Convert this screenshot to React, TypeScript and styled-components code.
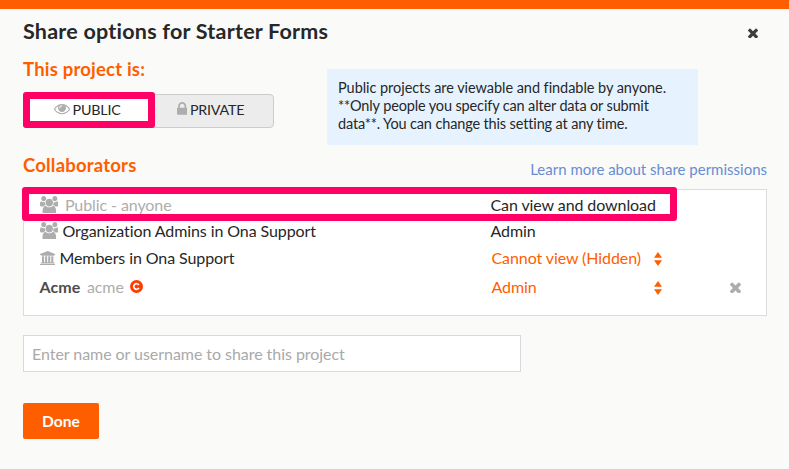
import React from "react";
import styled, { createGlobalStyle } from "styled-components";

const GlobalStyle = createGlobalStyle`
  * { box-sizing: border-box; }
  body { margin: 0; background: #fafaf8; color: #272727; font-family: Lato, "Open Sans", sans-serif; font-size: 16px; }
`;

const Dialog = styled.main`
  height: 469px;
  overflow: hidden;
  border-top: 9px solid #ff5e00;
  background: #fafaf8;
  padding: 9px 22px 0 23px;
`;

const Header = styled.header`
  display: flex;
  align-items: center;
  justify-content: space-between;
  height: 26px;
  padding-right: 8.7px;
`;

const Title = styled.h1`
  margin: 0;
  font-size: 21.5px;
  line-height: 26px;
  letter-spacing: 0.23px;
  color: #272727;
`;

const IconButton = styled.button`
  display: flex;
  border: 0;
  padding: 0;
  background: none;
  color: inherit;
`;

const CloseButton = styled(IconButton)`
  margin-top: 3px;
  color: #3a3f40;
`;

const Visibility = styled.section`
  display: flex;
  align-items: flex-start;
  height: 107px;
`;

const VisibilityMain = styled.div`
  width: 304px;
  padding-top: 13px;
`;

const Heading = styled.h2`
  margin: 0;
  font-size: 18.5px;
  line-height: 24px;
  letter-spacing: 0.2px;
  color: #ff5e00;
`;

const Toggle = styled.div`
  position: relative;
  display: flex;
  width: 251px;
  height: 34px;
  margin-top: 13px;
  border: 1px solid #cccccb;
  border-radius: 4px;
  background: #ececec;
`;

const ToggleOption = styled.button<{ $active?: boolean }>`
  display: flex;
  align-items: center;
  width: ${(p) => (p.$active ? 130 : 119)}px;
  padding: 0 0 3px ${(p) => (p.$active ? 29.5 : 22.5)}px;
  border: 0;
  border-radius: 3px;
  background: ${(p) => (p.$active ? "#fff" : "transparent")};
  font: 14.3px/20px Lato, sans-serif;
  letter-spacing: -0.2px;
  color: #272727;
  gap: 3px;
`;

const Marker = styled.div<{ $w: number; $h: number; $x: number; $y: number }>`
  position: absolute;
  left: ${(p) => p.$x}px;
  top: ${(p) => p.$y}px;
  width: ${(p) => p.$w}px;
  height: ${(p) => p.$h}px;
  border: 7px solid #ff0066;
  border-radius: 3px;
  pointer-events: none;
`;

const Info = styled.p`
  width: 371px;
  height: 76px;
  margin: 25px 0 0;
  padding: 10px 11px;
  background: #e6f3fe;
  font-size: 14.5px;
  line-height: 18px;
  white-space: nowrap;
`;

const InfoLine = styled.span<{ $spacing: number }>`
  display: block;
  letter-spacing: ${(p) => p.$spacing}px;
`;

const SectionHead = styled.div`
  display: flex;
  justify-content: space-between;
  height: 38px;
  padding-top: 2px;
`;

const Link = styled.a`
  margin-top: 6px;
  font-size: 15px;
  line-height: 20px;
  color: #688dd3;
`;

const List = styled.div`
  position: relative;
  height: 127px;
  padding: 2px 0 0 15.5px;
  border: 1px solid #dcdcdc;
  background: #fff;
`;

const Row = styled.div<{ $h: number }>`
  display: grid;
  grid-template-columns: 451px 163px 76px 1fr;
  align-items: center;
  height: ${(p) => p.$h}px;
  line-height: 20px;
  letter-spacing: -0.09px;
`;

const Name = styled.div<{ $gap: number; $muted?: boolean }>`
  display: flex;
  align-items: center;
  gap: ${(p) => p.$gap}px;
  color: ${(p) => (p.$muted ? "#adadad" : "#272727")};
`;

const FullName = styled.strong`
  color: #4c4c4c;
  letter-spacing: 0.1px;
`;

const Handle = styled.span`
  color: #adadad;
`;

const Role = styled.span<{ $editable?: boolean }>`
  padding-left: ${(p) => (p.$editable ? 1 : 0)}px;
  color: ${(p) => (p.$editable ? "#ff5e00" : "#272727")};
  white-space: nowrap;
`;

const Input = styled.input`
  display: block;
  width: 498px;
  height: 37px;
  margin-top: 19px;
  padding: 0 8px 1px;
  border: 1px solid #d9d9d9;
  border-radius: 0;
  background: #fff;
  font: 16px Lato, sans-serif;
  letter-spacing: -0.05px;
  &::placeholder { color: #a9a9a9; opacity: 1; }
`;

const DoneButton = styled.button`
  display: block;
  width: 76px;
  height: 36px;
  margin-top: 31px;
  padding: 0 0 1px;
  border: 0;
  border-radius: 2px;
  background: #ff5e00;
  color: #fff;
  font: 700 15.6px Lato, sans-serif;
`;

const Svg = styled.svg<{ $shift?: number }>`
  display: block;
  flex: none;
  fill: currentColor;
  margin-top: ${(p) => p.$shift ?? 0}px;
`;

const GreySvg = styled(Svg)`
  color: #adadad;
`;

/* Glyph outlines use a y-up grid, so each one is flipped. */
const Flip = ({ d }: { d: string }) => <path transform="scale(1 -1)" d={d} />;

const Users = () => (
  <GreySvg width="18.6" height="17.2" viewBox="0 -1536 1920 1664" preserveAspectRatio="none" $shift={-1}>
    <Flip d="M593 640q-162 -5 -265 -128h-134q-82 0 -138 40.5t-56 118.5q0 353 124 353q6 0 43.5 -21t97.5 -42.5t119 -21.5q67 0 133 23q-5 -37 -5 -66q0 -139 81 -256zM1664 3q0 -120 -73 -189.5t-194 -69.5h-874q-121 0 -194 69.5t-73 189.5q0 53 3.5 103.5t14 109t26.5 108.5t43 97.5t62 81t85.5 53.5t111.5 20q10 0 43 -21.5t73 -48t107 -48t135 -21.5t135 21.5t107 48t73 48t43 21.5q61 0 111.5 -20t85.5 -53.5t62 -81t43 -97.5t26.5 -108.5t14 -109t3.5 -103.5zM640 1280q0 -106 -75 -181t-181 -75t-181 75t-75 181t75 181t181 75t181 -75t75 -181zM1344 896q0 -159 -112.5 -271.5t-271.5 -112.5t-271.5 112.5t-112.5 271.5t112.5 271.5t271.5 112.5t271.5 -112.5t112.5 -271.5zM1920 671q0 -78 -56 -118.5t-138 -40.5h-134q-103 123 -265 128q81 117 81 256q0 29 -5 66q66 -23 133 -23q59 0 119 21.5t97.5 42.5t43.5 21q124 0 124 -353zM1792 1280q0 -106 -75 -181t-181 -75t-181 75t-75 181t75 181t181 75t181 -75t75 -181z" />
  </GreySvg>
);

const Eye = () => (
  <GreySvg width="16" height="10.3" viewBox="0 -1152 1792 1152">
    <Flip d="M1664 576q-152 236 -381 353q61 -104 61 -225q0 -185 -131.5 -316.5t-316.5 -131.5t-316.5 131.5t-131.5 316.5q0 121 61 225q-229 -117 -381 -353q133 -205 333.5 -326.5t434.5 -121.5t434.5 121.5t333.5 326.5zM944 960q0 20 -14 34t-34 14q-125 0 -214.5 -89.5t-89.5 -214.5q0 -20 14 -34t34 -14t34 14t14 34q0 86 61 147t147 61q20 0 34 14t14 34zM1792 576q0 -34 -20 -69q-140 -230 -376.5 -368.5t-499.5 -138.5t-499.5 139t-376.5 368q-20 35 -20 69t20 69q140 229 376.5 368t499.5 139t499.5 -139t376.5 -368q20 -35 20 -69z" />
  </GreySvg>
);

const Lock = () => (
  <GreySvg width="10.4" height="12.7" viewBox="0 -1408 1152 1408" $shift={-2}>
    <Flip d="M320 768h512v192q0 106 -75 181t-181 75t-181 -75t-75 -181v-192zM1152 672v-576q0 -40 -28 -68t-68 -28h-960q-40 0 -68 28t-28 68v576q0 40 28 68t68 28h32v192q0 184 132 316t316 132t316 -132t132 -316v-192h32q40 0 68 -28t28 -68z" />
  </GreySvg>
);

const Bank = () => (
  <GreySvg width="15.4" height="14.4" viewBox="0 -1536 1920 1792">
    <Flip d="M960 1536l960 -384v-128h-128q0 -26 -20.5 -45t-48.5 -19h-1526q-28 0 -48.5 19t-20.5 45h-128v128zM256 896h256v-768h128v768h256v-768h128v768h256v-768h128v768h256v-768h59q28 0 48.5 -19t20.5 -45v-64h-1664v64q0 26 20.5 45t48.5 19h59v768zM1851 -64q28 0 48.5 -19t20.5 -45v-128h-1920v128q0 26 20.5 45t48.5 19h1782z" />
  </GreySvg>
);

const Times = ({ size }: { size: number }) => (
  <Svg width={size} height={size} viewBox="110 -1234 1188 1188">
    <Flip d="M1298 214q0 -40 -28 -68l-136 -136q-28 -28 -68 -28t-68 28l-294 294l-294 -294q-28 -28 -68 -28t-68 28l-136 136q-28 28 -28 68t28 68l294 294l-294 294q-28 28 -28 68t28 68l136 136q28 28 68 28t68 -28l294 -294l294 294q28 28 68 28t68 -28l136 -136q28 -28 28 -68t-28 -68l-294 -294l294 -294q28 -28 28 -68z" />
  </Svg>
);

const RemoveButton = styled(IconButton)`
  color: #adadad;
`;

const SortSvg = styled(Svg)`
  color: #ff5e00;
`;

const Sort = () => (
  <SortSvg width="8" height="14" viewBox="0 0 8 14" $shift={2}>
    <path d="M4 0L8 5.7H0zM4 14L0 8.3H8z" />
  </SortSvg>
);

const BadgeSvg = styled(Svg)`
  color: #ff3c00;
`;

const CreatorBadge = () => (
  <BadgeSvg width="13" height="13" viewBox="0 0 13 13" $shift={-1}>
    <circle cx="6.5" cy="6.5" r="6.5" />
    <path d="M8.9 5A2.8 2.8 0 1 0 8.9 8" fill="none" stroke="#fff" strokeWidth="1.7" />
  </BadgeSvg>
);

export default function App() {
  return (
    <>
      <GlobalStyle />
      <Dialog>
        <Header>
          <Title>Share options for Starter Forms</Title>
          <CloseButton aria-label="Close"><Times size={10} /></CloseButton>
        </Header>
        <Visibility>
          <VisibilityMain>
            <Heading>This project is:</Heading>
            <Toggle>
              <ToggleOption $active><Eye />PUBLIC</ToggleOption>
              <ToggleOption><Lock />PRIVATE</ToggleOption>
              <Marker $x={-1} $y={-3} $w={132} $h={36} />
            </Toggle>
          </VisibilityMain>
          <Info>
            <InfoLine $spacing={-0.05}>Public projects are viewable and findable by anyone.</InfoLine>
            <InfoLine $spacing={-0.14}>**Only people you specify can alter data or submit</InfoLine>
            <InfoLine $spacing={-0.14}>data**. You can change this setting at any time.</InfoLine>
          </Info>
        </Visibility>
        <SectionHead>
          <Heading>Collaborators</Heading>
          <Link>Learn more about share permissions</Link>
        </SectionHead>
        <List>
          <Row $h={26}>
            <Name $gap={6.8} $muted><Users />Public - anyone</Name>
            <Role>Can view and download</Role>
          </Row>
          <Row $h={26}>
            <Name $gap={4.3}><Users />Organization Admins in Ona Support</Name>
            <Role>Admin</Role>
          </Row>
          <Row $h={28}>
            <Name $gap={4.6}><Bank />Members in Ona Support</Name>
            <Role $editable>Cannot view (Hidden)</Role>
            <Sort />
          </Row>
          <Row $h={30}>
            <Name $gap={6.5}><FullName>Acme</FullName><Handle>acme</Handle><CreatorBadge /></Name>
            <Role $editable>Admin</Role>
            <Sort />
            <RemoveButton aria-label="Remove"><Times size={11} /></RemoveButton>
          </Row>
          <Marker $x={-2} $y={-3} $w={655} $h={34} />
        </List>
        <Input placeholder="Enter name or username to share this project" />
        <DoneButton>Done</DoneButton>
      </Dialog>
    </>
  );
}
